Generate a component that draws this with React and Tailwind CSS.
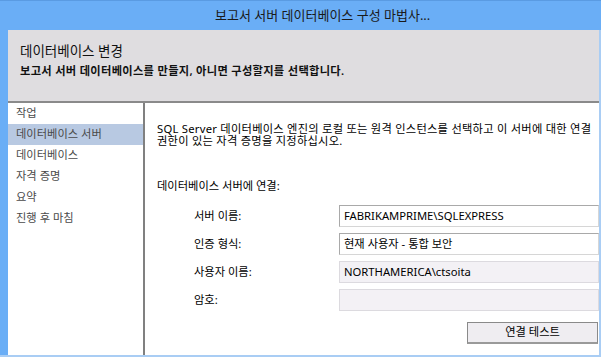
import React from "react";

const font = { fontFamily: '"Noto Sans", "Noto Sans CJK KR", sans-serif' };

export default function App() {
  const nav = ["작업", "데이터베이스 서버", "데이터베이스", "자격 증명", "요약", "진행 후 마침"];
  return (
    <div
      className="w-[601px] h-[357px] bg-white flex flex-col overflow-hidden text-[11.25px] text-black break-keep"
      style={font}
    >
      {/* Title bar */}
      <div className="h-[30px] shrink-0 bg-[#6aaef6] border-t border-[#5a9be2] flex items-center pl-[215px] text-[13px] text-[#1a1a1a]">
        보고서 서버 데이터베이스 구성 마법사...
      </div>
      <div className="flex-1 flex min-h-0">
        <div className="w-[8px] shrink-0 bg-[#6aaef6]" />
        <div className="flex-1 flex flex-col min-w-0">
          {/* Header */}
          <div className="h-[71px] shrink-0 bg-[#dfdde0] pl-[12px] pt-[12px]">
            <div className="text-[13.5px] leading-[19px] text-[#111]">데이터베이스 변경</div>
            <div className="mt-[3px] font-semibold leading-[14px] text-[#111] tracking-[0.3px]">
              보고서 서버 데이터베이스를 만들지, 아니면 구성할지를 선택합니다.
            </div>
          </div>
          <div className="h-[2px] shrink-0 bg-[#8a8a8a]" />
          <div className="flex-1 flex min-h-0">
            {/* Nav */}
            <div className="w-[135px] shrink-0 flex flex-col">
              {nav.map((n, i) => (
                <div
                  key={n}
                  className={
                    "h-[21px] flex items-center pl-[8px] text-[#4a4a4a] " +
                    (i === 1 ? "bg-[#b8c9e2]" : "")
                  }
                >
                  {n}
                </div>
              ))}
            </div>
            <div className="w-[2px] shrink-0 bg-[#808080]" />
            {/* Content */}
            <div className="flex-1 min-w-0 pl-[12px] pt-[20px]">
              <p className="leading-[12px] tracking-[0.25px]">
                SQL Server 데이터베이스 엔진의 로컬 또는 원격 인스턴스를 선택하고 이 서버에 대한 연결 권한이 있는 자격 증명을 지정하십시오.
              </p>
              <div className="mt-[32px] leading-[14px]">데이터베이스 서버에 연결:</div>
              <div className="mt-[12px] flex flex-col gap-[6px]">
                {[
                  ["서버 이름:", "FABRIKAMPRIME\\SQLEXPRESS", false],
                  ["인증 형식:", "현재 사용자 - 통합 보안", false],
                  ["사용자 이름:", "NORTHAMERICA\\ctsoita", true],
                  ["암호:", "", true],
                ].map(([l, v, dis]) => (
                  <div key={l} className="flex items-center h-[22px]">
                    <div className="w-[182px] pl-[37px] shrink-0">{l}</div>
                    <div
                      className={
                        "flex-1 h-[22px] flex items-center pl-[4px] border " +
                        (dis
                          ? "bg-[#f3f1f5] border-[#dcdadf]"
                          : "bg-white border-[#a9a9a9] border-b-[#d6d6d6] border-r-[#d6d6d6]")
                      }
                    >
                      {v}
                    </div>
                  </div>
                ))}
              </div>
              <div className="mt-[11px] flex justify-end pr-[1px]">
                <div className="w-[131px] h-[22px] flex items-center justify-center bg-[#efedf1] border border-[#8a8a8a] border-b-2 border-b-[#9a9a9a]">
                  연결 테스트
                </div>
              </div>
            </div>
          </div>
        </div>
        <div className="w-[2px] shrink-0 bg-[#a9cdf4]" />
      </div>
      <div className="h-[2px] shrink-0 bg-[#a9cdf4]" />
    </div>
  );
}
